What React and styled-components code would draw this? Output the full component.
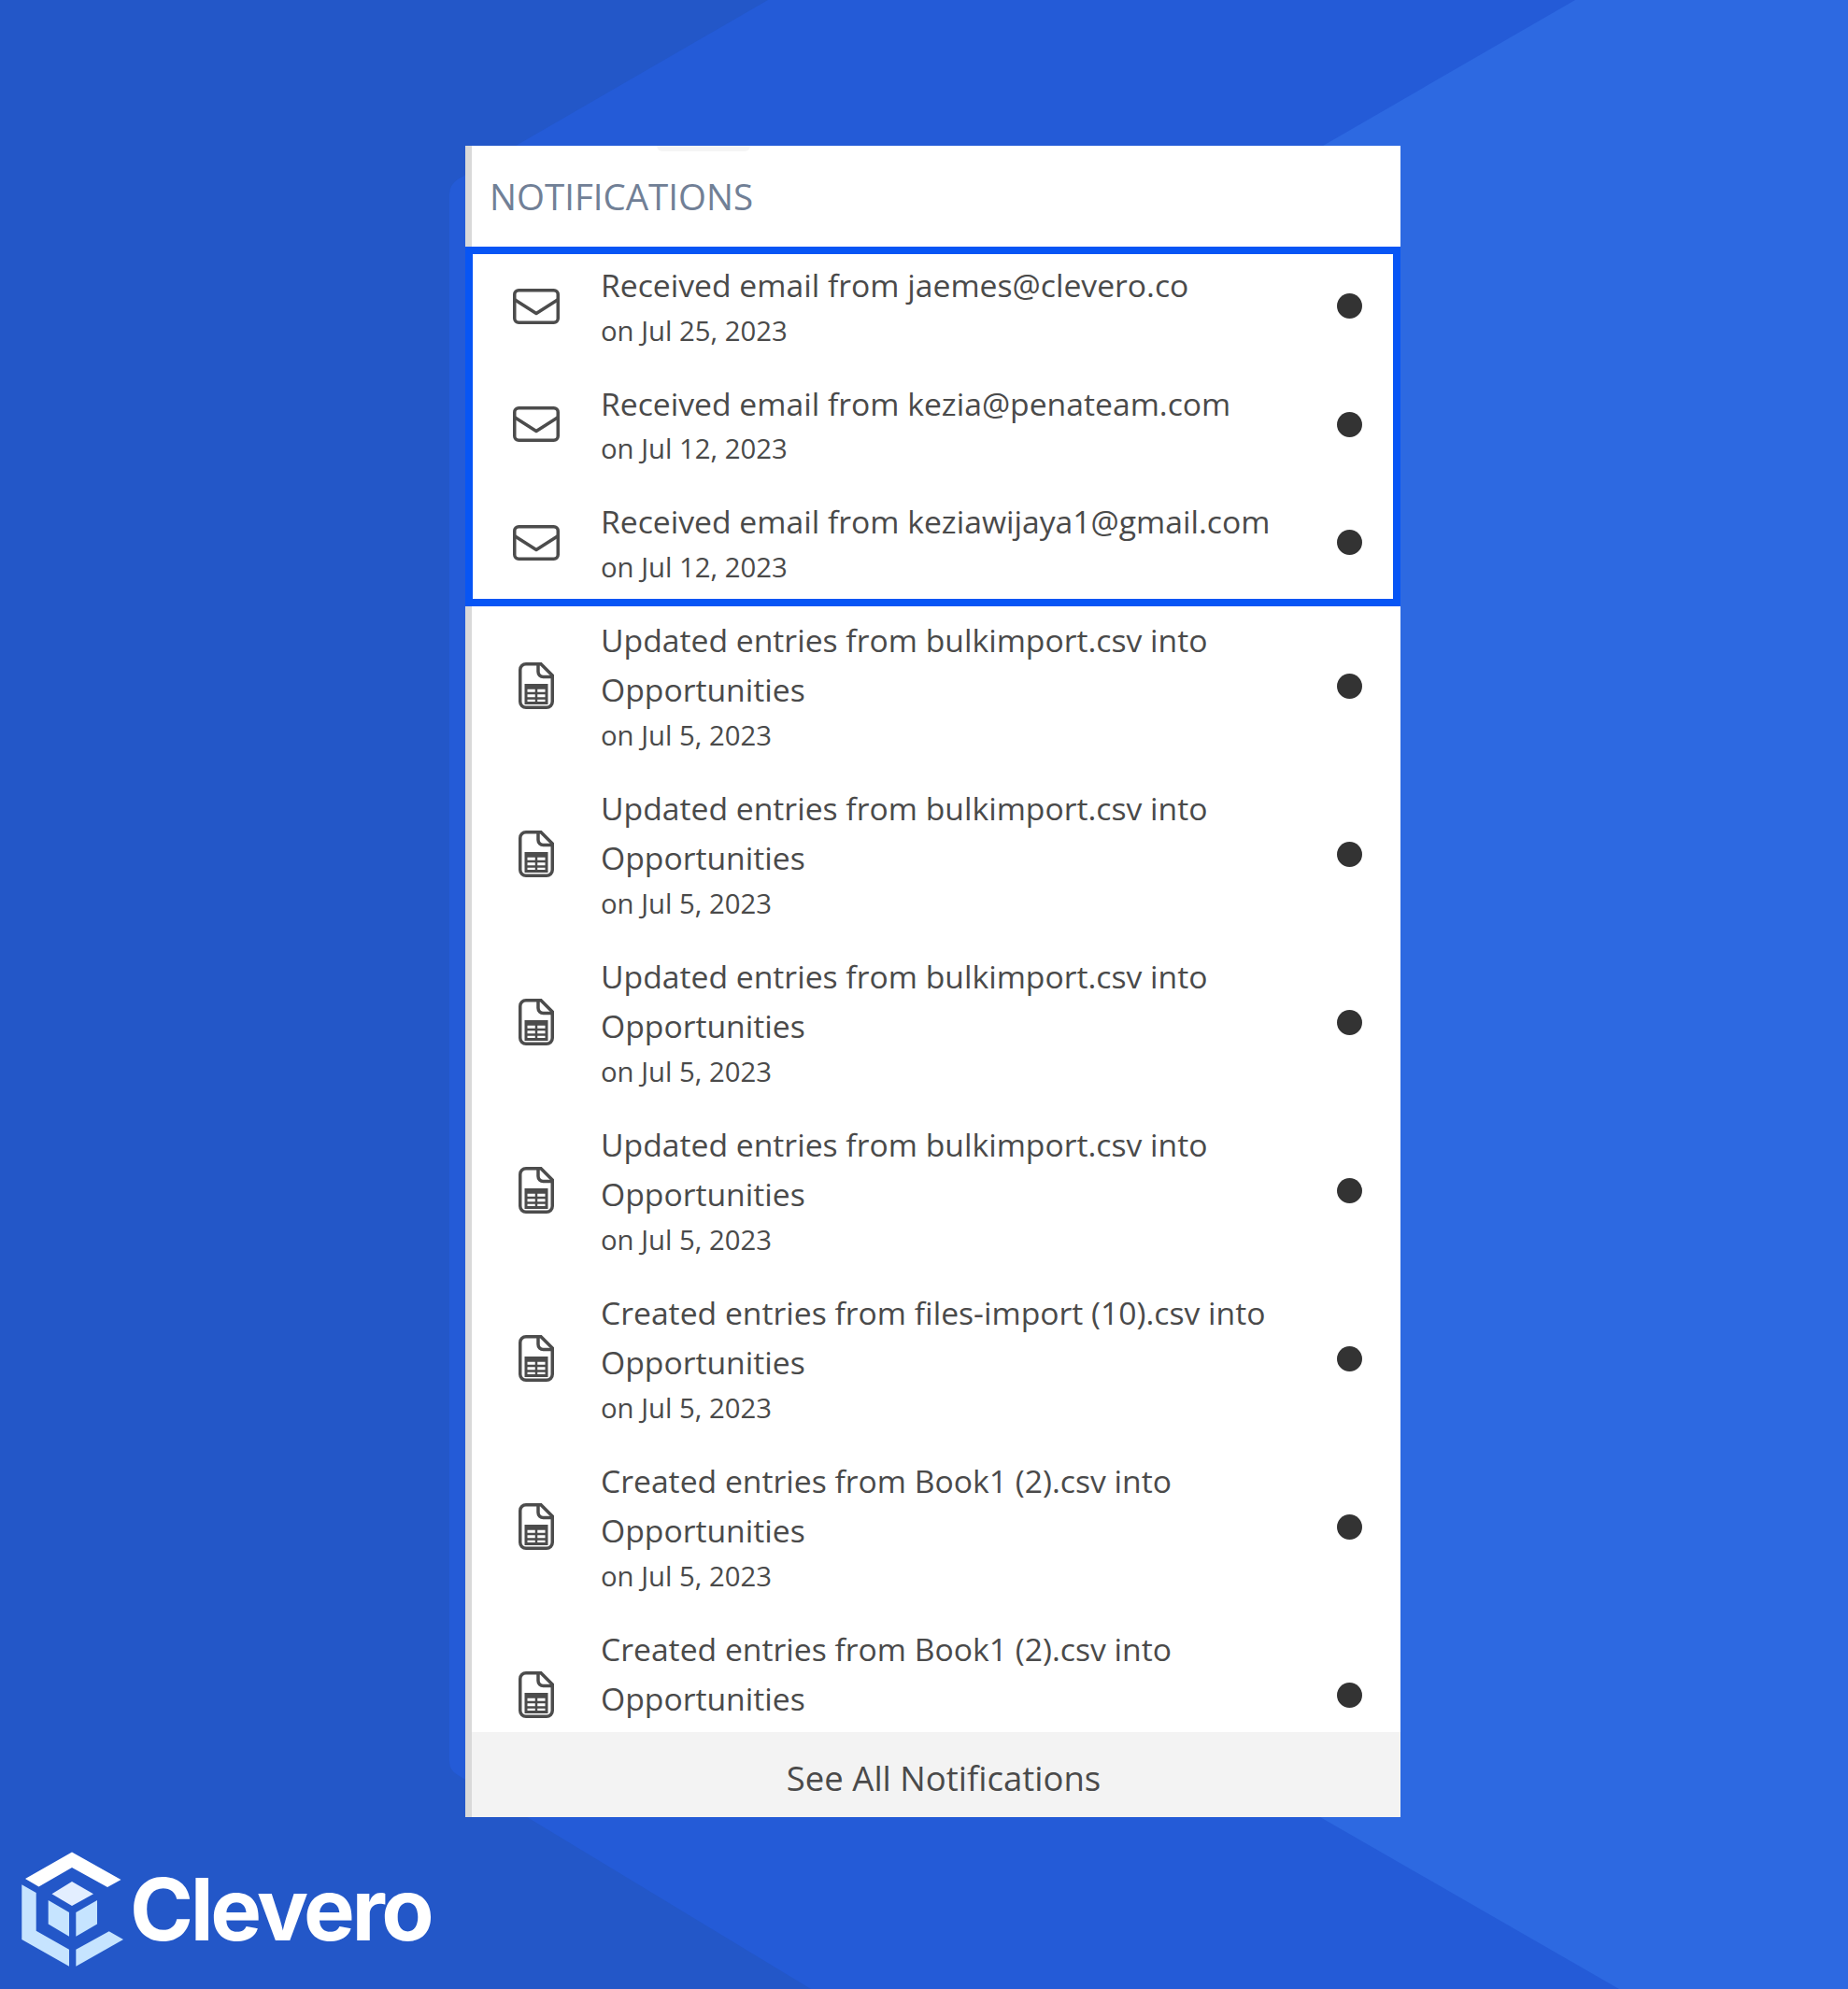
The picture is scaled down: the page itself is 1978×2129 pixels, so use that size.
import styled, { createGlobalStyle } from "styled-components"

const backdrop = `<svg xmlns='http://www.w3.org/2000/svg' width='1978' height='2129'><rect width='1978' height='2129' fill='#2357c8'/><path d='M822 0L490 192Q481 198 481 208V1885Q481 1895 490 1900L868 2129H1978V0Z' fill='#245bd7'/><path d='M1686 0L1300 223V1880L1733 2129H1978V0Z' fill='#2d69e1'/></svg>`

const GlobalStyle = createGlobalStyle`
  html, body {
    margin: 0;
    padding: 0;
  }
  body {
    font-family: "Open Sans", "Liberation Sans", sans-serif;
  }
`

const Page = styled.div`
  width: 1978px;
  height: 2129px;
  overflow: hidden;
  padding-top: 156px;
  box-sizing: border-box;
  background: url("data:image/svg+xml,${encodeURIComponent(backdrop)}") no-repeat;
`

const Panel = styled.div`
  position: relative;
  width: 1001px;
  height: 1789px;
  margin-left: 498px;
  box-sizing: border-box;
  border-left: 7px solid #d9d9d9;
  background: #fff;
  display: flex;
  flex-direction: column;
`

const TopNub = styled.div`
  position: absolute;
  top: 0;
  left: 198px;
  width: 100px;
  height: 6px;
  background: #f5f5f5;
  border-radius: 0 0 12px 12px;
`

const Header = styled.div`
  flex: 0 0 108px;
  display: flex;
  align-items: center;
  padding-left: 19px;
  box-sizing: border-box;
  font-size: 38.5px;
  color: #718096;
`

const HighlightFrame = styled.div`
  position: absolute;
  top: 108px;
  left: -7px;
  width: 1001px;
  height: 385px;
  box-sizing: border-box;
  border: 8px solid #0755f5;
  pointer-events: none;
`

const List = styled.div`
  flex: 1;
  min-height: 0;
  overflow: hidden;
`

const Row = styled.div`
  display: flex;
  align-items: center;
  box-sizing: border-box;
  padding: 15px 41px 14px 0;
  color: #4a4a4a;
`

const IconCell = styled.div`
  flex: 0 0 138px;
  display: flex;
  justify-content: center;
  color: #4c4c4c;
`

const Body = styled.div`
  flex: 1;
  min-width: 0;
  padding-right: 40px;
`

const Title = styled.div`
  font-size: 33.7px;
  line-height: 53.5px;
`

const When = styled.div`
  font-size: 29.3px;
  line-height: 43px;
  padding-bottom: 1px;
`

const Dot = styled.span`
  flex: 0 0 27px;
  height: 27px;
  border-radius: 50%;
  background: #333;
`

const SeeAll = styled.div`
  flex: 0 0 91px;
  display: flex;
  align-items: center;
  justify-content: center;
  box-sizing: border-box;
  padding: 7px 0 0 16px;
  background: #f3f3f3;
  font-size: 36.5px;
  color: #4a4a4a;
`

const Brand = styled.div`
  display: flex;
  align-items: center;
  margin-top: 37px;
  padding-left: 23px;
`

const BrandName = styled.span`
  margin-left: 6px;
  font-family: Inter, "Liberation Sans", sans-serif;
  font-size: 92px;
  font-weight: 700;
  line-height: 100px;
  color: #fff;
  letter-spacing: -3.4px;
`

const MailIcon = () => (
  <svg width="50" height="38" viewBox="0 0 50 38" fill="none" stroke="currentColor" strokeWidth="3.500">
    <rect x="1.750" y="1.750" width="46.500" height="34.500" rx="4.500" />
    <path d="M1.500 11.500L25 26.500 48.500 11.500" strokeLinejoin="round" />
  </svg>
)

const SheetIcon = () => (
  <svg width="38" height="50" viewBox="0 0 38 50" fill="none" stroke="currentColor" strokeWidth="3.500">
    <path d="M8 1.750H24L36.250 14V42A6.250 6.250 0 0 1 30 48.250H8A6.250 6.250 0 0 1 1.750 42V8A6.250 6.250 0 0 1 8 1.750Z" />
    <path d="M21 2V10A5.500 5.500 0 0 0 26.500 15.500H36.500" />
    <rect x="8" y="24.500" width="22" height="19" strokeWidth="3" />
    <path d="M8 26.500H30" strokeWidth="4.500" />
    <path d="M8 33H30M8 38.500H30M19 28V43.500" strokeWidth="2.500" />
  </svg>
)

const CleveroMark = () => (
  <svg width="110" height="124" viewBox="23 32 110 124">
    <path d="M77 32.500L129.500 62 115 70 77 49 41.500 69.500 27 61Z" fill="#fff" />
    <path d="M77 64L100 77.300 77 90 55.500 77.300Z" fill="#e3eeff" />
    <path d="M51.700 84L74 97V122.700L51.700 109.500Z" fill="#c6e4ff" />
    <path d="M81.300 97L104 84V109.500L81.300 122.700Z" fill="#c6e4ff" />
    <path d="M23.300 67.300L38.700 76V116.700L74 136.700V154.700L23.300 126Z" fill="#c6e4ff" />
    <path d="M81.300 136.700L116.700 117.300 132 126 81.300 154.700Z" fill="#c6e4ff" />
  </svg>
)

const emails = [
  { title: "Received email from jaemes@clevero.co", when: "on Jul 25, 2023" },
  { title: "Received email from kezia@penateam.com", when: "on Jul 12, 2023" },
  { title: "Received email from keziawijaya1@gmail.com", when: "on Jul 12, 2023" },
]

const imports = [
  { title: "Updated entries from bulkimport.csv into Opportunities", when: "on Jul 5, 2023" },
  { title: "Updated entries from bulkimport.csv into Opportunities", when: "on Jul 5, 2023" },
  { title: "Updated entries from bulkimport.csv into Opportunities", when: "on Jul 5, 2023" },
  { title: "Updated entries from bulkimport.csv into Opportunities", when: "on Jul 5, 2023" },
  { title: "Created entries from files-import (10).csv into Opportunities", when: "on Jul 5, 2023" },
  { title: "Created entries from Book1 (2).csv into Opportunities", when: "on Jul 5, 2023" },
  { title: "Created entries from Book1 (2).csv into Opportunities", when: "on Jul 5, 2023" },
]

const Notification = ({ icon: Icon, title, when }) => (
  <Row>
    <IconCell>
      <Icon />
    </IconCell>
    <Body>
      <Title>{title}</Title>
      <When>{when}</When>
    </Body>
    <Dot />
  </Row>
)

const App = () => {
  return (
    <Page>
      <GlobalStyle />
      <Panel>
        <TopNub />
        <Header>NOTIFICATIONS</Header>
        <List>
          {emails.map((item, i) => (
            <Notification key={i} icon={MailIcon} {...item} />
          ))}
          {imports.map((item, i) => (
            <Notification key={i} icon={SheetIcon} {...item} />
          ))}
        </List>
        <HighlightFrame />
        <SeeAll>See All Notifications</SeeAll>
      </Panel>
      <Brand>
        <CleveroMark />
        <BrandName>Clevero</BrandName>
      </Brand>
    </Page>
  )
}

export default App
